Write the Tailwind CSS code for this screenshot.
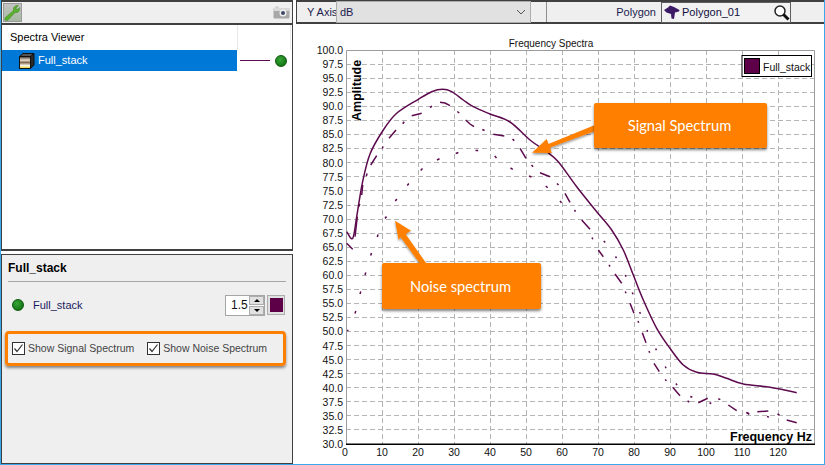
<!DOCTYPE html>
<html lang="en">
<head>
  <meta charset="UTF-8"/>
  <title>Spectra Viewer</title>
  <script src="https://cdn.jsdelivr.net/npm/@tailwindcss/browser@4"></script>
</head>
<body class="bg-white">
<div class="relative flex w-[825px] h-[465px] overflow-hidden bg-white border-l border-r border-b border-[#3aa8ea] font-['Liberation_Sans',sans-serif] text-[11px] text-[#111] whitespace-nowrap">

  <!-- Left column -->
  <div class="flex flex-col w-[292px] shrink-0">
    <!-- Tool bar -->
    <div class="flex items-center justify-between h-[25px] px-[1px] bg-[#efefef] border border-t-2 border-[#404040] border-b-2">
      <div class="flex items-center justify-center w-[19px] h-[19px] bg-[linear-gradient(#c4c4c4,#a6b8a0)] border border-[#9a9a9a]">
        <svg width="17" height="17" viewBox="0 0 17 17"><path d="M1 14 L9.500 6.500 C9 3.500 11 1 14.500 1.500 L12 4 L13 6 L15.500 3.500 C16.300 6.800 14 9 11 8.500 L3.500 16.500 L1 16 Z" fill="#5bb030" stroke="#3f8a22" stroke-width=".6"/></svg>
      </div>
      <svg class="mr-[1px]" width="17" height="13" viewBox="0 0 17 13"><rect x=".5" y="2" width="16" height="10.500" rx="1" fill="#a8a8a8"/><rect x="2" y="0.500" width="4" height="2" fill="#d0d0d0"/><rect x=".5" y="2" width="16" height="3" fill="#d8d8d8"/><circle cx="10" cy="7" r="3.500" fill="#f0f0f0"/><circle cx="10" cy="7" r="2" fill="#3d4a66"/></svg>
    </div>

    <!-- Tree -->
    <div class="flex flex-col h-[226px] bg-white border-x border-b-2 border-[#404040]">
      <div class="flex h-[25px]">
        <div class="flex items-center w-[235px] pl-[8px] text-black">Spectra Viewer</div>
        <div class="w-[54px] border-x border-[#e8e8e8]"></div>
      </div>
      <div class="flex h-[21px]">
        <div class="flex items-center gap-[3px] w-[235px] pl-[17px] bg-[#0078d7] text-white">
          <svg width="16" height="16" viewBox="0 0 16 16">
            <defs><linearGradient id="cube" x1="0" y1="0" x2="0" y2="1"><stop offset="0" stop-color="#3a2a20"/><stop offset=".3" stop-color="#e8e0d0"/><stop offset=".5" stop-color="#8a6a50"/><stop offset=".75" stop-color="#f8f4e8"/><stop offset="1" stop-color="#f0d020"/></linearGradient></defs>
            <rect x=".5" y="3.500" width="11" height="12" fill="url(#cube)" stroke="#111"/>
            <path d="M.5 3.500 L4 .5 H15 L11.500 3.500 Z" fill="#555" stroke="#111"/>
            <path d="M11.500 3.500 L15 .5 V12 L11.500 15.500 Z" fill="#2a2a2a" stroke="#111"/>
          </svg>
          <span>Full_stack</span>
        </div>
        <div class="flex items-center w-[54px] pl-[3px]">
          <div class="w-[30px] h-[1px] bg-[#5d0a4e]"></div>
          <div class="ml-[5px] w-[12px] h-[12px] rounded-full bg-[radial-gradient(circle_at_40%_35%,#35a535,#0a660a)] border border-[#0b5a0b]"></div>
        </div>
      </div>
    </div>

    <div class="h-[3px] bg-white"></div>

    <!-- Properties -->
    <div class="flex flex-col flex-1 px-[3px] bg-[#efefef] border-x border-t border-b border-[#404040]">
      <div class="mx-[3px] h-[27px] flex items-center font-bold text-[12px] text-black border-b border-[#a5a5a5]">Full_stack</div>
      <div class="flex items-center h-[46px] pl-[7px]">
        <div class="w-[12px] h-[12px] rounded-full bg-[radial-gradient(circle_at_40%_35%,#35a535,#0a660a)] border border-[#0b5a0b]"></div>
        <span class="ml-[9px] text-[#1b1b5e]">Full_stack</span>
        <div class="flex items-center ml-auto w-[40px] h-[21px] bg-white border border-[#a5a5a5]">
          <span class="flex-1 pl-[5px] text-[12px]">1.5</span>
          <div class="flex flex-col w-[15px] h-[19px] gap-[1px]">
            <div class="flex flex-1 items-center justify-center bg-[#e1e1e1] border border-[#adadad]"><div class="border-x-[3px] border-x-transparent border-b-[3px] border-b-black"></div></div>
            <div class="flex flex-1 items-center justify-center bg-[#e1e1e1] border border-[#adadad]"><div class="border-x-[3px] border-x-transparent border-t-[3px] border-t-black"></div></div>
          </div>
        </div>
        <div class="flex items-center justify-center ml-[2px] mr-[4px] w-[18px] h-[20px] bg-[#e1e1e1] border border-[#adadad]">
          <div class="w-[13px] h-[14px] bg-[#5d0047]"></div>
        </div>
      </div>
      <!-- highlighted options -->
      <div class="flex items-center h-[35px] mt-[3px] mr-[3px] pl-[4px] rounded-[4px] border-[3px] border-[#ff8000] shadow-[0_2px_3px_rgba(0,0,0,0.45)] text-[#444] text-[10.500px]">
        <div class="flex items-center justify-center w-[13px] h-[13px] bg-white border border-[#333]">
          <svg width="11" height="11" viewBox="0 0 11 11"><path d="M1.500 5.500 L4 8.500 L9.500 1.500" fill="none" stroke="#333" stroke-width="1.200"/></svg>
        </div>
        <span class="ml-[3px]">Show Signal Spectrum</span>
        <div class="flex items-center justify-center ml-[13px] w-[13px] h-[13px] bg-white border border-[#333]">
          <svg width="11" height="11" viewBox="0 0 11 11"><path d="M1.500 5.500 L4 8.500 L9.500 1.500" fill="none" stroke="#333" stroke-width="1.200"/></svg>
        </div>
        <span class="ml-[3px]">Show Noise Spectrum</span>
      </div>
    </div>
  </div>

  <!-- Right column -->
  <div class="flex flex-col flex-1 ml-[3px]">
    <!-- Top bar -->
    <div class="flex items-center h-[24px] bg-[#efefef] border-y-2 border-l border-[#404040] text-[#1b1b4e]">
      <span class="ml-[10px] w-[29px]">Y Axis</span>
      <div class="flex items-center justify-between w-[195px] h-[22px] pl-[3px] pr-[4px] bg-[#e1e1e1] border border-[#adadad]">
        <span>dB</span>
        <svg width="10" height="6" viewBox="0 0 10 6"><path d="M1 1 L5 5 L9 1" fill="none" stroke="#555"/></svg>
      </div>
      <div class="ml-[15px] h-full w-[1px] bg-[#8f8f8f]"></div>
      <span class="ml-auto">Polygon</span>
      <div class="flex items-center ml-[5px] mr-[33px] w-[130px] h-[21px] bg-[#f2f2f2] border border-[#5f5f5f] pl-[2px]">
        <svg width="16" height="15" viewBox="0 0 16 15"><path d="M0 5 L4 2.500 L6 0.500 L10 2 L15.500 5 L15 6.500 L11 7.500 L10 14 L7.500 13.500 L7 9 L2.500 7.500 Z" fill="#3c1a66"/></svg>
        <span class="ml-[2px] text-[#10103e]">Polygon_01</span>
        <svg class="ml-auto" width="17" height="17" viewBox="0 0 17 17"><circle cx="7" cy="7" r="5" fill="#fff" stroke="#222" stroke-width="1.500"/><path d="M10.500 10.500 L15.500 15.500" stroke="#111" stroke-width="3"/></svg>
      </div>
    </div>

    <!-- Chart -->
    <svg class="block font-['Liberation_Sans',sans-serif]" width="528" height="440" viewBox="296 24 528 440">
      <!-- grid -->
      <path fill="none" stroke="#b4b4b4" stroke-dasharray="5 3" d="M346 64.500H815M346 78.500H815M346 92.500H815M346 106.500H815M346 120.500H815M346 134.500H815M346 148.500H815M346 162.500H815M346 176.500H815M346 190.500H815M346 205.500H815M346 219.500H815M346 233.500H815M346 247.500H815M346 261.500H815M346 275.500H815M346 289.500H815M346 303.500H815M346 317.500H815M346 331.500H815M346 345.500H815M346 359.500H815M346 373.500H815M346 387.500H815M346 401.500H815M346 415.500H815M346 429.500H815M382.500 50V444M418.500 50V444M454.500 50V444M490.500 50V444M526.500 50V444M562.500 50V444M598.500 50V444M634.500 50V444M670.500 50V444M706.500 50V444M742.500 50V444M778.500 50V444"/>
      <path fill="none" stroke="#9c9c9c" d="M346.500 444V50.500H814.500V444"/>
      <path fill="none" stroke="#000" stroke-width="1.500" d="M346 444.200H815"/>

      <!-- y labels -->
      <g font-size="10.500" fill="#111" text-anchor="end">
        <text x="343" y="54">100.0</text><text x="343" y="68">97.5</text><text x="343" y="82">95.0</text><text x="343" y="96">92.5</text><text x="343" y="110">90.0</text><text x="343" y="124">87.5</text><text x="343" y="138">85.0</text><text x="343" y="152">82.5</text><text x="343" y="167">80.0</text><text x="343" y="181">77.5</text><text x="343" y="195">75.0</text><text x="343" y="209">72.5</text><text x="343" y="223">70.0</text><text x="343" y="237">67.5</text><text x="343" y="251">65.0</text><text x="343" y="265">62.5</text><text x="343" y="279">60.0</text><text x="343" y="293">57.5</text><text x="343" y="307">55.0</text><text x="343" y="321">52.5</text><text x="343" y="335">50.0</text><text x="343" y="350">47.5</text><text x="343" y="364">45.0</text><text x="343" y="378">42.5</text><text x="343" y="392">40.0</text><text x="343" y="406">37.5</text><text x="343" y="420">35.0</text><text x="343" y="434">32.5</text><text x="343" y="448">30.0</text>
      </g>
      <!-- x labels -->
      <g font-size="10.500" fill="#111" text-anchor="middle">
        <text x="345" y="456">0</text><text x="382" y="456">10</text><text x="418" y="456">20</text><text x="454" y="456">30</text><text x="490" y="456">40</text><text x="526" y="456">50</text><text x="562" y="456">60</text><text x="598" y="456">70</text><text x="634" y="456">80</text><text x="670" y="456">90</text><text x="706" y="456">100</text><text x="742" y="456">110</text><text x="778" y="456">120</text>
      </g>

      <text x="551" y="47" font-size="10" fill="#111" text-anchor="middle">Frequency Spectra</text>
      <text transform="translate(361 121) rotate(-90)" font-size="12.500" font-weight="bold" fill="#000">Amplitude</text>
      <text x="730" y="441" font-size="12.500" font-weight="bold" fill="#000">Frequency Hz</text>

      <!-- legend -->
      <rect x="742" y="55.500" width="69.500" height="21" fill="#fff" stroke="#000"/>
      <rect x="744.500" y="58.500" width="15" height="15" fill="#5d0047" stroke="#000"/>
      <text x="763" y="71" font-size="10.500" fill="#111">Full_stack</text>

      <!-- solid spectrum, smoothed below -->
      <path id="solid-curve" fill="none" stroke="#5d0a4e" stroke-width="1.500" stroke-linejoin="round"/>
      <!-- dash-dot signal -->
      <path fill="none" stroke="#5d0a4e" stroke-width="1.500" d="M346.700 243.300L352.700 249.300M355 236.700L357.300 216.700M361.700 195L362.700 185M370.700 165L376.700 155.700M389 138.300L396 130M411.700 115.700L421.700 113.300M440 102.300L445 103L450 105.700M465.700 120L470 124L474 126.700M493.300 134.300L504.300 136M520 148.300L526 158.300M540 172.700L550 176.700M565 193.300L570 202.300M581.700 220L590 229.300M598.300 250L603.300 256.700M615 274L621.700 283.300M630 303.300L634 313.300M642.300 332.700L646 342.700M654 363.300L659.300 371.700M672.700 387.300L680 395.700M698.300 402.700L707.700 398.300M728.300 405L736.700 410.700M746.300 412.300L749.300 414.300M757.300 411.700L768.300 411M786.700 420L796.700 422.700"/>
      <!-- dots -->
      <path fill="none" stroke="#5d0a4e" stroke-width="1.500" d="M347 330.500h1.500M355 313.500l.8-2.500M360 294l.8-2.500M365 275l.8-2.500M370.700 255.500l.8-2.500M377.300 237l.8-2.500M385 218.500l1.500-2M395.300 201l1.500-2M407.300 185.500l1.500-2M420.700 170.500l1.800-2M437 160l2.500-1.200M455.700 153.500l2.700-1M475.500 150.500h2.700M494.700 156l1.800 2M510.500 168l2.300 1.300M529 176l2.500 1M545.700 186l2 1.800M560 201l1.500 1.800M359 206.500l.8-2.500M366.300 176l.8-2.500M382.300 148.500l.8-2M402.700 123.700l1.500-2M430 107.500l2-1.300M457.300 111.500l2 1.500M482.300 129.500l2.300 1M512.500 139.200l1.800 1.500M531.500 165l1.600 1.800M557 183.500l1.500 1.600M574.500 210l1 1.700M592 237.500l.8 1.800M603.700 241l1.500 1.500M609 265l1 1.500M615.500 256.500l1 1.700M625.300 275l.7 1.700M625.300 291.500l.7 1.700M632.300 292.500l.7 1.700M639.700 312l.7 1.700M638 321l.7 1.700M647 330l.7 1.700M649 351l.7 1.700M655.700 348.500l.7 1.700M665.300 366.500l.7 1.700M665.300 379.300l1 1.500M676 383.500l1 1.600M687.500 401l1.800 1M690.300 396.500l2 .8M709.500 402.700l1.800 .8M718.300 398.800l2 .8M747 412.700l2 1M767 416.500l2 .6M777.500 414l2 1"/>
    </svg>
  </div>

  <!-- Callouts over the chart -->
  <svg class="absolute left-0 top-0 pointer-events-none" width="825" height="465" viewBox="0 0 825 465">
    <defs><filter id="sh" x="-20%" y="-20%" width="140%" height="140%"><feDropShadow dx="0" dy="1.500" stdDeviation="1" flood-color="#000" flood-opacity=".45"/></filter></defs>
    <path filter="url(#sh)" fill="#ff8000" d="M531 152.700L545.700 139L547.500 144L594 125V131L549 147.500L550.700 153Z"/>
    <path filter="url(#sh)" fill="#ff8000" d="M394 220.700L410 230.700L404.500 234L425 263H418.500L399.500 237L397.700 240Z"/>
  </svg>
  <div class="absolute left-[593px] top-[103px] flex items-center justify-center w-[173px] h-[45px] pr-[2px] rounded-[2px] bg-[#ff8000] shadow-[0_2px_3px_rgba(0,0,0,0.5)] text-white text-[14.700px] font-['Lato',sans-serif]">Signal Spectrum</div>
  <div class="absolute left-[381px] top-[263px] flex items-center justify-center w-[159px] h-[46px] pr-[2px] rounded-[2px] bg-[#ff8000] shadow-[0_2px_3px_rgba(0,0,0,0.5)] text-white text-[14.700px] font-['Lato',sans-serif]">Noise spectrum</div>
</div>
<script>
  // Catmull-Rom through the traced points so the solid curve has no corners
  const pts = [[346.7,231.7],[352.7,238.3],[356.7,216.7],[362.3,183.3],[370,154],[383.3,130],[396.7,113.3],[418.3,99.3],[431.7,91.7],[442.7,89.3],[451.7,91.7],[463.3,100],[473.3,106.7],[490,114],[510,122],[530,140],[546.7,151.7],[558.3,161.7],[576.7,186.7],[596.7,211.7],[611.7,230],[623.3,250],[633.3,275],[643.3,300],[656.7,328.3],[670,348.3],[683.3,365],[696.7,372.3],[713.3,374],[726.7,378.3],[743.3,384],[770,387.3],[796.7,392.7]];
  let d = `M${pts[0]}`;
  for (let i = 0; i < pts.length - 1; i++) {
    const a = pts[Math.max(i - 1, 0)], b = pts[i], c = pts[i + 1], e = pts[Math.min(i + 2, pts.length - 1)];
    d += `C${b[0] + (c[0] - a[0]) / 6} ${b[1] + (c[1] - a[1]) / 6} ${c[0] - (e[0] - b[0]) / 6} ${c[1] - (e[1] - b[1]) / 6} ${c[0]} ${c[1]}`;
  }
  document.getElementById('solid-curve').setAttribute('d', d);
</script>
</body>
</html>
